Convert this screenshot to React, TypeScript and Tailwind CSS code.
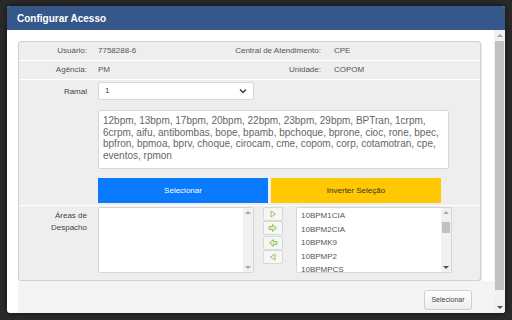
import React from "react";

const F = { fontFamily: '"Liberation Sans", Arial, sans-serif' };

function Arrow({ dir, dbl }: { dir: "r" | "l"; dbl?: boolean }) {
  const r = dir === "r";
  return (
    <svg width="10" height="10" viewBox="0 0 10 10">
      {dbl ? (
        r ? (
          <path d="M1 3.5 H4.5 V1.5 L8.5 5 L4.5 8.5 V6.5 H1 Z" fill="#d8f0b8" stroke="#86c054" strokeWidth="0.9" />
        ) : (
          <path d="M9 3.5 H5.5 V1.5 L1.5 5 L5.5 8.5 V6.5 H9 Z" fill="#d8f0b8" stroke="#86c054" strokeWidth="0.9" />
        )
      ) : r ? (
        <path d="M3 2 L7.5 5 L3 8 Z" fill="none" stroke="#86c054" strokeWidth="0.9" />
      ) : (
        <path d="M7 2 L2.5 5 L7 8 Z" fill="none" stroke="#86c054" strokeWidth="0.9" />
      )}
    </svg>
  );
}

function MiniScroll({ thumb }: { thumb?: boolean }) {
  return (
    <div className="w-[10px] h-full bg-[#f1f1f1] flex flex-col items-center justify-between py-[2px]">
      <svg width="6" height="4" viewBox="0 0 6 4"><path d="M0 4 L3 1 L6 4 Z" fill="#a8a8a8" /></svg>
      {thumb ? <div className="w-[8px] h-[11px] bg-[#c1c1c1] -mt-[26px]" /> : null}
      <svg width="6" height="4" viewBox="0 0 6 4"><path d="M0 0 L3 3 L6 0 Z" fill={thumb ? "#505050" : "#a8a8a8"} /></svg>
    </div>
  );
}

export default function App() {
  const items = ["10BPM1CIA", "10BPM2CIA", "10BPMK9", "10BPMP2", "10BPMPCS"];
  return (
    <div className="w-[512px] h-[320px] bg-[#2a2a2a] pt-[6px] pl-[7px] overflow-hidden" style={F}>
      <div className="w-[498px] h-[307px] bg-white rounded-[3px] flex flex-col overflow-hidden shadow-[0_0_6px_rgba(0,0,0,0.6)]">
        <div className="h-[24px] bg-[#35578a] flex items-center pl-[10px] shrink-0">
          <span className="text-white font-bold text-[10px]">Configurar Acesso</span>
        </div>
        <div className="flex flex-1 min-h-0">
          <div className="flex-1 flex flex-col min-w-0">
            <div className="pl-[11px] pt-[11px] pr-[12px]">
              <div className="w-[463px] h-[240px] bg-[#eeeeee] border border-[#cfcfcf] rounded-[3px] flex flex-col text-[8px] text-[#555] shadow-[1px_1px_1px_rgba(0,0,0,0.08)]">
                <div className="h-[19px] flex items-center border-b border-white">
                  <div className="w-[79px] text-right pr-[11px]">Usuário:</div>
                  <div className="w-[130px]">7758288-6</div>
                  <div className="w-[106px] text-right pr-[13px]">Central de Atendimento:</div>
                  <div>CPE</div>
                </div>
                <div className="h-[19px] flex items-center border-b border-white">
                  <div className="w-[79px] text-right pr-[11px]">Agência:</div>
                  <div className="w-[130px]">PM</div>
                  <div className="w-[106px] text-right pr-[13px]">Unidade:</div>
                  <div>COPOM</div>
                </div>
                <div className="flex border-b border-white h-[126px]">
                  <div className="w-[79px] text-right pr-[11px] pt-[6px] text-[#444]">Ramal</div>
                  <div className="flex flex-col pt-[2px]">
                    <div className="w-[156px] h-[18px] bg-white border border-[#d6d6d6] rounded-[2px] flex items-center justify-between px-[6px] text-[#444]">
                      <span>1</span>
                      <svg width="8" height="6" viewBox="0 0 8 6"><path d="M1 1.5 L4 4.5 L7 1.5" fill="none" stroke="#333" strokeWidth="1.3" /></svg>
                    </div>
                    <div className="mt-[10px] w-[351px] h-[59px] bg-white border border-[#d6d6d6] rounded-[2px] pl-[4px] pr-[3px] pt-[4px] text-[10px] leading-[11.5px] text-[#666]">
                      12bpm, 13bpm, 17bpm, 20bpm, 22bpm, 23bpm, 29bpm, BPTran, 1crpm, 6crpm, aifu, antibombas, bope, bpamb, bpchoque, bprone, cioc, rone, bpec, bpfron, bpmoa, bprv, choque, cirocam, cme, copom, corp, cotamotran, cpe, eventos, rpmon
                    </div>
                    <div className="mt-[9px] flex gap-[3px]">
                      <div className="w-[170px] h-[25px] bg-[#0a7bff] text-white flex items-center justify-center text-[8px]">Selecionar</div>
                      <div className="w-[170px] h-[25px] bg-[#ffc800] text-[#333] flex items-center justify-center text-[8px]">Inverter Seleção</div>
                    </div>
                  </div>
                </div>
                <div className="flex flex-1">
                  <div className="w-[79px] text-right pr-[11px] pt-[4px] leading-[12px] text-[#444]">
                    Áreas de<br />Despacho
                  </div>
                  <div className="pt-[1px] flex">
                    <div className="w-[156px] h-[66px] bg-white border border-[#d6d6d6] rounded-[2px] flex justify-end">
                      <MiniScroll />
                    </div>
                    <div className="ml-[9px] flex flex-col gap-[0px] pt-[0px]">
                      <div className="w-[20px] h-[14px] border border-[#d8d8d8] rounded-[2px] bg-[#f6f6f6] flex items-center justify-center"><Arrow dir="r" /></div>
                      <div className="w-[20px] h-[14px] border border-[#d8d8d8] rounded-[2px] bg-[#f6f6f6] flex items-center justify-center mt-[0px]"><Arrow dir="r" dbl /></div>
                      <div className="w-[20px] h-[14px] border border-[#d8d8d8] rounded-[2px] bg-[#f6f6f6] flex items-center justify-center mt-[1px]"><Arrow dir="l" dbl /></div>
                      <div className="w-[20px] h-[14px] border border-[#d8d8d8] rounded-[2px] bg-[#f6f6f6] flex items-center justify-center mt-[0px]"><Arrow dir="l" /></div>
                    </div>
                    <div className="ml-[13px] w-[156px] h-[66px] bg-white border border-[#d6d6d6] rounded-[2px] flex overflow-hidden">
                      <div className="flex-1 pl-[4px] pt-[1px] text-[8px] leading-[13.5px] text-[#555] overflow-hidden">
                        {items.map((t) => (
                          <div key={t}>{t}</div>
                        ))}
                      </div>
                      <MiniScroll thumb />
                    </div>
                  </div>
                </div>
              </div>
            </div>
            <div className="ml-[11px] flex-1 bg-[#f4f4f4] flex justify-end items-start pr-[22px] pt-[9px]">
              <div className="w-[48px] h-[20px] border border-[#cfcfcf] rounded-[3px] bg-gradient-to-b from-white to-[#ececec] flex items-center justify-center text-[7px] text-[#444]">
                Selecionar
              </div>
            </div>
          </div>
          <div className="w-[11px] bg-[#f1f1f1] flex flex-col items-center pt-[3px] pb-[3px]">
            <svg width="6" height="4" viewBox="0 0 6 4"><path d="M0 4 L3 1 L6 4 Z" fill="#a3a3a3" /></svg>
            <div className="w-[9px] flex-1 bg-[#c1c1c1] mt-[4px] mb-[16px]" />
            <svg width="6" height="4" viewBox="0 0 6 4"><path d="M0 0 L3 3 L6 0 Z" fill="#505050" /></svg>
          </div>
        </div>
      </div>
    </div>
  );
}
